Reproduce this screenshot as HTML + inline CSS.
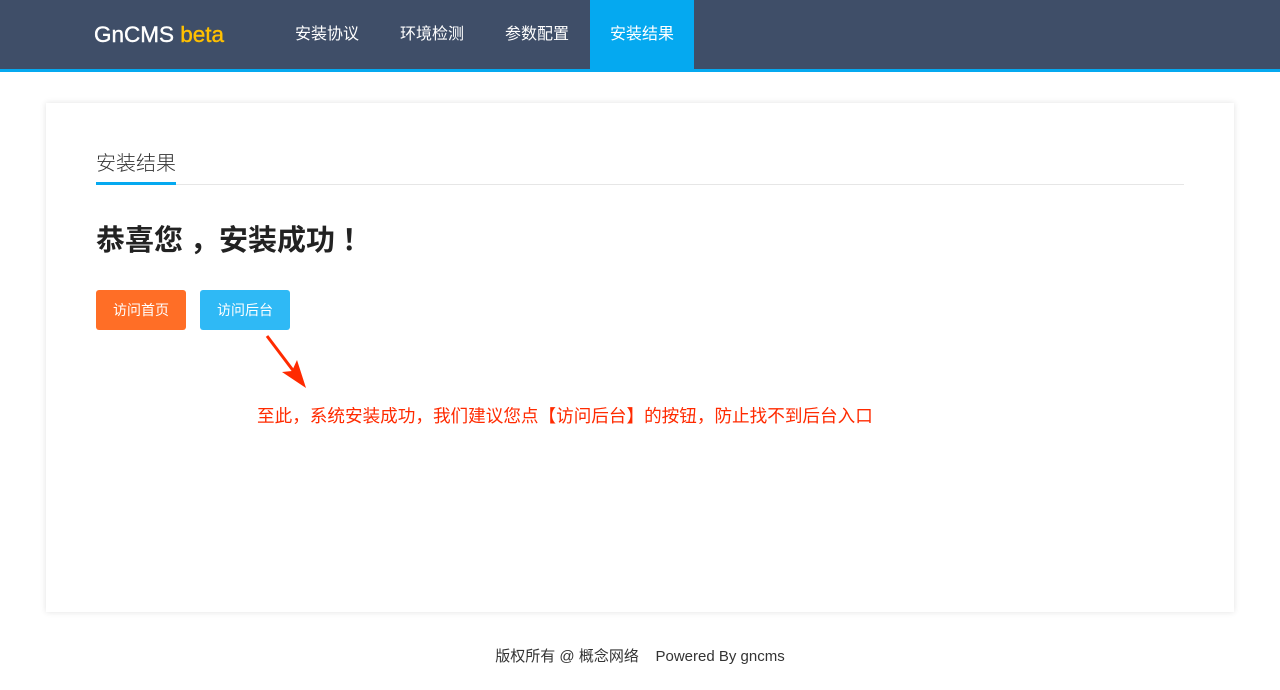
<!DOCTYPE html>
<html><head><meta charset="utf-8"><style>
*{margin:0;padding:0;box-sizing:border-box}
body{width:1280px;height:690px;background:#fff;font-family:"Liberation Sans","Noto Sans CJK SC",sans-serif;position:relative;overflow:hidden}
.hd{position:absolute;left:0;top:0;width:1280px;height:72px;background:#3f4e68;border-bottom:3px solid #05a9f0}
.logo{position:absolute;left:94px;top:22px;font-size:22.5px;color:#fff;-webkit-text-stroke:0.4px #fff}
.logo span{color:#ffc000;-webkit-text-stroke:0.4px #ffc000}
.nav a{position:absolute;top:0;height:69px;line-height:69px;color:#fff;font-size:16px;text-align:center;width:104px}
.nav a.on{background:#05a9f0}
.card{position:absolute;left:46px;top:103px;width:1188px;height:509px;background:#fff;box-shadow:0 0 6px rgba(0,0,0,.12)}
.tab{position:absolute;left:50px;top:44px;font-size:20px;color:#333;font-weight:300}
.line{position:absolute;left:50px;top:81px;width:1088px;height:1px;background:#e6e6e6}
.uline{position:absolute;left:50px;top:79px;width:80px;height:3px;background:#05a9f0}
h1{position:absolute;left:50px;top:115px;font-size:29px;color:#222;font-weight:bold;font-family:"Noto Sans CJK SC",sans-serif;line-height:40px;white-space:nowrap}
.btn{position:absolute;top:187px;width:90px;height:40px;line-height:40px;border-radius:3px;color:#fff;font-size:14px;text-align:center}
.note{position:absolute;left:211px;top:301px;font-size:17.6px;color:#ff2a00;font-family:"Noto Sans CJK SC",sans-serif;line-height:24px;white-space:nowrap}
.ft{position:absolute;top:645px;left:0;width:1280px;text-align:center;font-size:15px;color:#333}
</style></head><body>
<div class="hd">
<div class="logo">GnCMS <span>beta</span></div>
<div class="nav">
<a style="left:275px">安装协议</a><a style="left:380px">环境检测</a><a style="left:485px">参数配置</a><a class="on" style="left:590px">安装结果</a>
</div></div>
<div class="card">
<div class="tab">安装结果</div>
<div class="line"></div><div class="uline"></div>
<h1>恭喜您<span style="margin-left:7px">，</span>安装成功<span style="margin-left:7px">！</span></h1>
<div class="btn" style="left:50px;background:#ff6e26">访问首页</div>
<div class="btn" style="left:154px;background:#2fb9f5">访问后台</div>
<div class="note">至此，系统安装成功，我们建议您点【访问后台】的按钮，防止找不到后台入口</div>
</div>
<svg style="position:absolute;left:0;top:0" width="1280" height="690"><line x1="267" y1="336" x2="298" y2="377" stroke="#ff2a00" stroke-width="3"/><polygon points="306,388 282,372 292,371 297,360" fill="#ff2a00"/></svg>
<div class="ft">版权所有 @ 概念网络&nbsp;&nbsp;&nbsp;&nbsp;Powered By gncms</div>
</body></html>
